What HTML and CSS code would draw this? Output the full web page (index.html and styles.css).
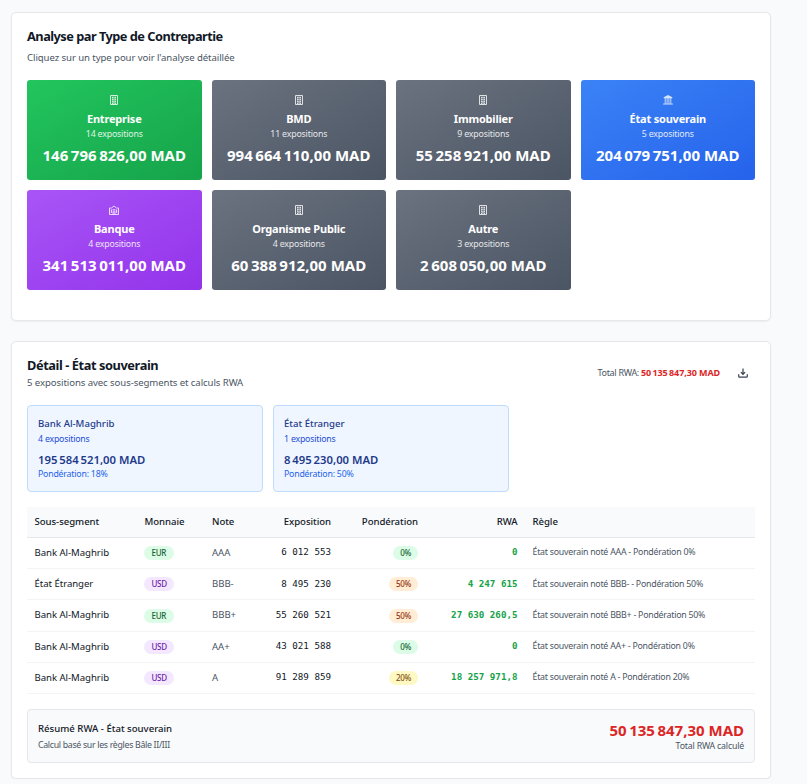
FILE: index.html
```
<!DOCTYPE html>
<html lang="fr">
<head>
<meta charset="utf-8">
<title>Analyse par Type de Contrepartie</title>
<link rel="stylesheet" href="styles.css">
</head>
<body>
<svg width="0" height="0" class="defs">
  <symbol id="building" viewBox="0 0 10 10"><path d="M1.500 .5h7v9h-7zM3.500 9.500V8h3v1.500" fill="none" stroke="currentColor" stroke-linejoin="round"/><path d="M3 2.500h4M3 4.500h4M3 6.500h4" stroke="currentColor" stroke-width="1.300" stroke-dasharray="1.100 .35"/></symbol>
  <symbol id="landmark" viewBox="0 0 10 10"><path d="M5 0 9.300 2.200v1H.7v-1zM.2 8.600h9.600v1H.2z" fill="currentColor"/><path d="M2.200 3v5.600M4.100 3v5.600M5.900 3v5.600M7.800 3v5.600" stroke="currentColor" stroke-width=".9"/></symbol>
  <symbol id="bank" viewBox="0 0 10 10"><path d="M.5 3h2L5 1l2.500 2h2v6.500H.5z" fill="none" stroke="currentColor" stroke-linejoin="round"/><path d="M2.400 4.500v3.500M7.600 4.500v3.500M3.500 4.900h3M4.100 9V6.800h1.800V9" fill="none" stroke="currentColor" stroke-width="1.100"/></symbol>
</svg>
<main class="page">
  <section class="card overview">
    <h2 class="title">Analyse par Type de Contrepartie</h2>
    <p class="subtitle">Cliquez sur un type pour voir l'analyse détaillée</p>
    <div class="types">
      <div class="type green"><svg class="icon"><use href="#building"/></svg><h3>Entreprise</h3><p>14 expositions</p><strong>146&#8239;796&#8239;826,00 MAD</strong></div>
      <div class="type gray"><svg class="icon"><use href="#building"/></svg><h3>BMD</h3><p>11 expositions</p><strong>994&#8239;664&#8239;110,00 MAD</strong></div>
      <div class="type gray"><svg class="icon"><use href="#building"/></svg><h3>Immobilier</h3><p>9 expositions</p><strong>55&#8239;258&#8239;921,00 MAD</strong></div>
      <div class="type blue"><svg class="icon"><use href="#landmark"/></svg><h3>État souverain</h3><p>5 expositions</p><strong>204&#8239;079&#8239;751,00 MAD</strong></div>
      <div class="type purple"><svg class="icon"><use href="#bank"/></svg><h3>Banque</h3><p>4 expositions</p><strong>341&#8239;513&#8239;011,00 MAD</strong></div>
      <div class="type gray"><svg class="icon"><use href="#building"/></svg><h3>Organisme Public</h3><p>4 expositions</p><strong>60&#8239;388&#8239;912,00 MAD</strong></div>
      <div class="type gray"><svg class="icon"><use href="#building"/></svg><h3>Autre</h3><p>3 expositions</p><strong>2&#8239;608&#8239;050,00 MAD</strong></div>
    </div>
  </section>

  <section class="card detail">
    <header class="detail-head">
      <div>
        <h2 class="title">Détail - État souverain</h2>
        <p class="subtitle">5 expositions avec sous-segments et calculs RWA</p>
      </div>
      <div class="actions">
        <span class="total">Total RWA: <b>50&#8239;135&#8239;847,30 MAD</b></span>
        <svg class="download" viewBox="0 0 10 10" fill="none" stroke="currentColor" stroke-width="1.200"><path d="M5 .5v5.700M2.900 4.200 5 6.300l2.100-2.100M.7 6.300v2q0 .9.9.9h6.800q.9 0 .9-.9v-2"/></svg>
      </div>
    </header>
    <div class="segments">
      <div class="segment"><h4>Bank Al-Maghrib</h4><p>4 expositions</p><strong>195&#8239;584&#8239;521,00 MAD</strong><p class="weight">Pondération: 18%</p></div>
      <div class="segment"><h4>État Étranger</h4><p>1 expositions</p><strong>8&#8239;495&#8239;230,00 MAD</strong><p class="weight">Pondération: 50%</p></div>
    </div>
    <table class="table">
      <colgroup><col class="c1"><col class="c2"><col class="c3"><col class="c4"><col class="c5"><col class="c6"><col></colgroup>
      <thead><tr><th>Sous-segment</th><th>Monnaie</th><th>Note</th><th class="r">Exposition</th><th class="r">Pondération</th><th class="r">RWA</th><th>Règle</th></tr></thead>
      <tbody>
        <tr><td>Bank Al-Maghrib</td><td><span class="pill eur">EUR</span></td><td class="note">AAA</td><td class="r mono">6 012 553</td><td class="r"><span class="pill w0">0%</span></td><td class="r mono rwa">0</td><td class="rule">État souverain noté AAA - Pondération 0%</td></tr>
        <tr><td>État Étranger</td><td><span class="pill usd">USD</span></td><td class="note">BBB-</td><td class="r mono">8 495 230</td><td class="r"><span class="pill w50">50%</span></td><td class="r mono rwa">4 247 615</td><td class="rule">État souverain noté BBB- - Pondération 50%</td></tr>
        <tr><td>Bank Al-Maghrib</td><td><span class="pill eur">EUR</span></td><td class="note">BBB+</td><td class="r mono">55 260 521</td><td class="r"><span class="pill w50">50%</span></td><td class="r mono rwa">27 630 260,5</td><td class="rule">État souverain noté BBB+ - Pondération 50%</td></tr>
        <tr><td>Bank Al-Maghrib</td><td><span class="pill usd">USD</span></td><td class="note">AA+</td><td class="r mono">43 021 588</td><td class="r"><span class="pill w0">0%</span></td><td class="r mono rwa">0</td><td class="rule">État souverain noté AA+ - Pondération 0%</td></tr>
        <tr><td>Bank Al-Maghrib</td><td><span class="pill usd">USD</span></td><td class="note">A</td><td class="r mono">91 289 859</td><td class="r"><span class="pill w20">20%</span></td><td class="r mono rwa">18 257 971,8</td><td class="rule">État souverain noté A - Pondération 20%</td></tr>
      </tbody>
    </table>
    <footer class="summary">
      <div><h4>Résumé RWA - État souverain</h4><p>Calcul basé sur les règles Bâle II/III</p></div>
      <div class="summary-total"><strong>50&#8239;135&#8239;847,30 MAD</strong><p>Total RWA calculé</p></div>
    </footer>
  </section>
</main>
</body>
</html>
```
FILE: styles.css
```
* { box-sizing: border-box; margin: 0; padding: 0; }
body { background: #f9fafb; color: #111827; font-family: "Segoe UI", "Noto Sans", sans-serif; font-size: 10px; overflow: hidden; }
.defs { display: block; height: 0; }
.page { width: 760px; margin: 12px 0 0 11px; display: flex; flex-direction: column; gap: 20px; }
.card { background: #fff; border: 1px solid #e5e7eb; border-radius: 5px; padding: 15px; box-shadow: 0 1px 2px rgba(0,0,0,.05); }
.overview { height: 309px; }
.detail { height: 438px; }
.title { font-size: 12.8px; line-height: 16px; padding-bottom: 2px; font-weight: 700; letter-spacing: -.52px; white-space: nowrap; }
.subtitle { font-size: 9.6px; line-height: 15px; color: #4b5563; letter-spacing: -.08px; white-space: nowrap; }
.overview .subtitle { margin: 4px 0 15px; }
.types { display: grid; grid-template-columns: repeat(4, 1fr); gap: 10px; }
.type { height: 100px; border-radius: 3px; color: #fff; padding-top: 15px; display: flex; flex-direction: column; align-items: center; white-space: nowrap; }
.icon { width: 10px; height: 10px; opacity: .8; }
.type h3 { font-size: 11px; line-height: 16px; font-weight: 700; letter-spacing: -.2px; margin-top: 6px; }
.type p { font-size: 8.8px; line-height: 13px; opacity: .85; letter-spacing: -.18px; margin-top: .5px; }
.type strong { font-size: 15px; line-height: 20px; font-weight: 700; letter-spacing: .03px; margin-top: 4.5px; }
.green { background: linear-gradient(to bottom right, #22c55e, #16a34a); }
.gray { background: linear-gradient(to bottom right, #6b7280, #4b5563); }
.blue { background: linear-gradient(to bottom right, #3b82f6, #2563eb); }
.purple { background: linear-gradient(to bottom right, #a855f7, #9333ea); }

.detail-head { display: flex; justify-content: space-between; height: 48px; }
.detail-head .title { letter-spacing: -.42px; }
.actions { display: flex; align-items: center; height: 31px; gap: 18px; padding-right: 7px; }
.total { font-size: 9px; color: #4b5563; letter-spacing: -.3px; white-space: nowrap; }
.total b { color: #dc2626; font-weight: 700; letter-spacing: -.1px; }
.download { width: 10px; height: 10px; color: #374151; }
.segments { display: grid; grid-template-columns: repeat(3, 1fr); gap: 10px; }
.segment { height: 87px; border: 1px solid #bfdbfe; background: #eff6ff; border-radius: 4px; padding: 10px; color: #1e3a8a; }
.segment h4 { font-size: 9.6px; line-height: 16px; font-weight: 500; }
.segment p { font-size: 8.8px; line-height: 13px; color: #1d4ed8; letter-spacing: -.22px; }
.segment strong { display: block; font-size: 11.3px; line-height: 16px; font-weight: 650; margin-top: 6px; }
.segment h4 + p { margin-top: 1px; }
.segment .weight { color: #2563eb; line-height: 12px; }

.table { width: 100%; margin-top: 15px; table-layout: fixed; border-collapse: separate; border-spacing: 0; }
.c1 { width: 110px; } .c2 { width: 67.5px; } .c3 { width: 63.5px; } .c4 { width: 70.5px; } .c5 { width: 87px; } .c6 { width: 99.5px; }
.table th { height: 31px; padding: 0 7.5px 2px; background: #f9fafb; border-bottom: 1px solid #e5e7eb; text-align: left; font-size: 9.6px; font-weight: 500; letter-spacing: -.05px; white-space: nowrap; }
.table td { height: 31.2px; padding: 0 7.5px; border-bottom: 1px solid #f3f4f6; font-size: 9.6px; line-height: 14px; letter-spacing: -.04px; white-space: nowrap; }
.table .r { text-align: right; }
.table .note { color: #4b5563; }
.table .mono { font-family: Consolas, "DejaVu Sans Mono", monospace; font-size: 9.2px; letter-spacing: 0; padding-bottom: 1.5px; }
.table .rwa { color: #16a34a; font-weight: 700; }
.table .rule { font-size: 8.8px; color: #4b5563; padding-bottom: 1.5px; letter-spacing: -.24px; }
.pill { display: inline-block; height: 14px; line-height: 14px; border-radius: 7px; padding: 0 7px; font-size: 8px; font-weight: 500; letter-spacing: -.3px; vertical-align: middle; }
.eur, .w0 { background: #dcfce7; color: #166534; }
.usd { background: #f3e8ff; color: #6b21a8; }
.w50 { background: #ffedd5; color: #9a3412; }
.w20 { background: #fef9c3; color: #854d0e; }
.usd, .eur { margin-left: -.5px; padding: 0 7.5px; }

.summary { margin-top: 15px; height: 54px; padding: 10px; background: #f9fafb; border: 1px solid #e5e7eb; border-radius: 4px; display: flex; justify-content: space-between; white-space: nowrap; }
.summary h4 { font-size: 9.6px; line-height: 17px; font-weight: 500; }
.summary p { font-size: 8.8px; line-height: 17px; color: #4b5563; letter-spacing: -.32px; }
.summary-total { text-align: right; }
.summary-total strong { display: block; font-size: 15px; line-height: 20px; color: #dc2626; }
.summary .summary-total p { line-height: 12px; letter-spacing: -.2px; }
```
